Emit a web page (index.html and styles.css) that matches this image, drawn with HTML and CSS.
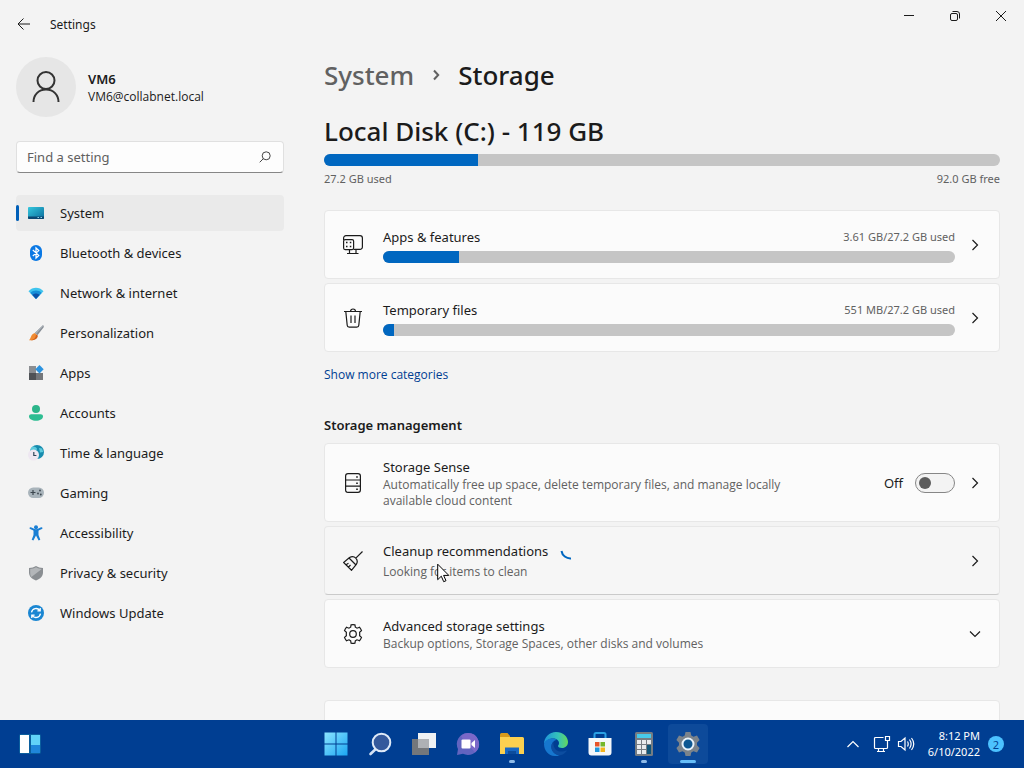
FILE: index.html
```html
<!DOCTYPE html>
<html lang="en">
<head>
    <meta charset="UTF-8">
    <meta name="viewport" content="width=device-width, initial-scale=1.0">
    <title>Settings</title>
    <link rel="stylesheet" href="styles.css">
</head>
<body>
    <div class="window">
        <header class="titlebar">
            <button class="back" aria-label="Back">
                <svg width="14" height="14" viewBox="0 0 14 14"><path d="M13 7H1.500M6.500 1.500L1 7l5.500 5.500"/></svg>
            </button>
            <span class="app-name">Settings</span>
            <div class="caption">
                <button aria-label="Minimize"><svg width="12" height="12" viewBox="0 0 12 12"><path d="M1 5.500h10"/></svg></button>
                <button aria-label="Restore"><svg width="12" height="12" viewBox="0 0 12 12"><rect x="1.500" y="3.500" width="7" height="7" rx="1.500"/><path d="M3.500 1.500H8a2.500 2.500 0 0 1 2.500 2.500v4.500"/></svg></button>
                <button aria-label="Close"><svg width="12" height="12" viewBox="0 0 12 12"><path d="M1 1l10 10M11 1L1 11"/></svg></button>
            </div>
        </header>
        <div class="body">
            <aside class="sidebar">
                <div class="user">
                    <div class="avatar">
                        <svg width="32" height="32" viewBox="0 0 32 32"><circle cx="16" cy="9.500" r="8.500"/><path d="M3.500 31c0-7 5-12.500 12.500-12.500s12.500 5.500 12.500 12.500"/></svg>
                    </div>
                    <div class="user-text">
                        <div class="user-name">VM6</div>
                        <div class="user-mail">VM6@collabnet.local</div>
                    </div>
                </div>
                <div class="search">
                    <input type="text" placeholder="Find a setting" aria-label="Find a setting">
                    <svg width="12" height="12" viewBox="0 0 12 12"><circle cx="7.200" cy="4.800" r="4"/><path d="M4.400 7.600L.7 11.300"/></svg>
                </div>
                <nav class="menu">
                    <a href="#" class="active">
                        <svg width="16" height="16" viewBox="0 0 16 16"><defs><linearGradient id="scr" x1="0" y1="0" x2="1" y2="1"><stop offset="0" stop-color="#35c8de"/><stop offset="1" stop-color="#0a6c9c"/></linearGradient></defs><rect y="2" width="16" height="12" rx="1" fill="url(#scr)"/><path d="M0 11.500h16V13a1 1 0 0 1-1 1H1a1 1 0 0 1-1-1z" fill="#0b4772"/><path d="M9.500 12.500h1.500M12.500 12.500h1.500" stroke="#8ed6ec"/></svg>
                        System
                    </a>
                    <a href="#">
                        <svg width="16" height="16" viewBox="0 0 16 16"><rect x="2" width="12" height="16" rx="6" fill="#0a78e4"/><path d="M4.800 5l6 5.400L8 13V3l2.800 2.600-6 5.400" fill="none" stroke="#fff" stroke-width="1.200"/></svg>
                        Bluetooth &amp; devices
                    </a>
                    <a href="#">
                        <svg width="16" height="16" viewBox="0 0 16 16"><path d="M.5 6.200C4.700 1.600 11.300 1.600 15.500 6.200L8 14z" fill="#3fc4ee"/><path d="M2.400 8C5.500 4.800 10.500 4.800 13.600 8L8 14z" fill="#168fd8"/><path d="M4.400 10c2-2 5.200-2 7.200 0L8 14z" fill="#0b52a8"/></svg>
                        Network &amp; internet
                    </a>
                    <a href="#">
                        <svg width="16" height="16" viewBox="0 0 16 16"><path d="M14.900.3c1 .5 1 1.500.6 2.200L9.400 10.300 6.800 8z" fill="#858c94"/><path d="M14.900.3L6.800 8l1.300 1.100L15.600.8z" fill="#aab1b8"/><path d="M6.600 8l3 2.500c.2 3.300-3 5.200-8.600 4.800 2-1.500 1.500-5.800 5.600-7.300z" fill="#f08b32"/><path d="M1 15.300c4 0 6.800-1.800 7-5.900l1.600 1.100c.2 3.300-3 5.200-8.600 4.800z" fill="#cf5e1c"/></svg>
                        Personalization
                    </a>
                    <a href="#">
                        <svg width="16" height="16" viewBox="0 0 16 16"><path d="M1 1h7v7H1z" fill="#8b8e92"/><path d="M1 8h7v7H1z" fill="#4f5256"/><path d="M8 8h7v7H8z" fill="#74777b"/><path d="M11.500 0l4.200 4.200-4.200 4.200-4.200-4.200z" fill="#2b93e0"/></svg>
                        Apps
                    </a>
                    <a href="#">
                        <svg width="16" height="16" viewBox="0 0 16 16"><circle cx="8" cy="4" r="4" fill="#2cb58a"/><path d="M3.200 9.300h9.600c1.200 0 2.200.8 2.200 2 0 2.900-3.200 4.500-7 4.500s-7-1.600-7-4.500c0-1.200 1-2 2.200-2z" fill="#2dbd92"/></svg>
                        Accounts
                    </a>
                    <a href="#">
                        <svg width="16" height="16" viewBox="0 0 16 16"><circle cx="9" cy="7" r="7" fill="#188cae"/><path d="M5 1.500c2 .3 4 .8 4 2.500S6 5 5 6.500 3 8 2.500 5.500 4 2 5 1.500zM11 3l3 .5 1.300 3.500-3.300.5z" fill="#5ccbdd"/><circle cx="5.500" cy="10" r="5.500" fill="#eee7f1"/><path d="M5.800 7v3.500h2.600" fill="none" stroke="#30465a" stroke-width="1.200"/></svg>
                        Time &amp; language
                    </a>
                    <a href="#">
                        <svg width="16" height="16" viewBox="0 0 16 16"><rect y="2.500" width="16" height="10.500" rx="5.200" fill="#a9b4bb"/><path d="M2.500 7.500h5M5 5v5" stroke="#3c464e" stroke-width="1.200"/><circle cx="10" cy="8.500" r=".9" fill="#3c464e"/><circle cx="12" cy="5.500" r=".9" fill="#3c464e"/><circle cx="12.800" cy="9.500" r=".9" fill="#3c464e"/></svg>
                        Gaming
                    </a>
                    <a href="#">
                        <svg width="16" height="16" viewBox="0 0 16 16"><circle cx="8" cy="2.200" r="2" fill="#1a7fd4"/><path d="M2.500 3.200L8 5.600l5.500-2.400" fill="none" stroke="#1a7fd4" stroke-width="2" stroke-linecap="round" stroke-linejoin="round"/><path d="M5.500 4.500h5v5.500l1.800 4.800-1.700.7L8 10.500l-2.600 5-1.700-.7L5.500 10z" fill="#1a7fd4"/></svg>
                        Accessibility
                    </a>
                    <a href="#">
                        <svg width="16" height="16" viewBox="0 0 16 16"><path d="M8 1c2 1.300 4.300 2 7 2v4.500c0 3.600-2.500 6.300-7 8-4.500-1.700-7-4.400-7-8V3c2.700 0 5-.7 7-2z" fill="#8a8e92"/><path d="M8 2.300c1.800 1 3.700 1.600 5.800 1.700L3.400 12C2.500 10.800 2.200 9.300 2.200 7.500V4C4.300 3.900 6.200 3.300 8 2.300z" fill="#b3b6b9"/></svg>
                        Privacy &amp; security
                    </a>
                    <a href="#">
                        <svg width="16" height="16" viewBox="0 0 16 16"><circle cx="8" cy="8" r="8" fill="#1a86d2"/><path d="M3.500 7.300a4.600 4.600 0 0 1 8.300-1.800M12.500 8.700a4.600 4.600 0 0 1-8.300 1.800M12.200 3v2.800H9.400M3.800 13v-2.800h2.800" fill="none" stroke="#fff" stroke-width="1.300"/></svg>
                        Windows Update
                    </a>
                </nav>
            </aside>
            <main class="content">
                <h1 class="breadcrumb">
                    <a href="#">System</a>
                    <svg width="8" height="12" viewBox="0 0 8 12"><path d="M2 1.500L6.200 6 2 10.500"/></svg>
                    <span>Storage</span>
                </h1>
                <h2 class="disk">Local Disk (C:) - 119 GB</h2>
                <div class="bar"><div class="fill" style="width: 22.8%"></div></div>
                <div class="disk-labels"><span>27.2 GB used</span><span>92.0 GB free</span></div>

                <div class="cards">
                    <a href="#" class="card">
                        <svg class="icon" width="20" height="20" viewBox="0 0 20 20"><path d="M.6 5V3A2.400 2.400 0 0 1 3 .6h14A2.400 2.400 0 0 1 19.400 3v9a2.400 2.400 0 0 1-2.400 2.400H10.500M6.500 14.500v4M13 14.500v4M4 18.500h11.500"/><rect x=".6" y="4.600" width="10" height="10" rx="1.500"/><path d="M3 7.500h1.500M6.800 7.500h1.500M3 11.500h1.500M6.800 11.500h1.500" stroke-width="1.600"/></svg>
                        <div class="text">
                            <div class="row"><span class="title">Apps &amp; features</span><span class="note">3.61 GB/27.2 GB used</span></div>
                            <div class="bar"><div class="fill" style="width: 13.3%"></div></div>
                        </div>
                        <svg class="chevron" width="12" height="12" viewBox="0 0 12 12"><path d="M3.500 1l5 5-5 5"/></svg>
                    </a>
                    <a href="#" class="card">
                        <svg class="icon" width="20" height="20" viewBox="0 0 20 20"><path d="M1 3.500h18M7.500 3.500a2.500 2.500 0 0 1 5 0M2.800 3.500l1.400 13.800a2 2 0 0 0 2 1.900h7.600a2 2 0 0 0 2-1.900L17.200 3.500M8 7.500v7.500M12 7.500v7.500"/></svg>
                        <div class="text">
                            <div class="row"><span class="title">Temporary files</span><span class="note">551 MB/27.2 GB used</span></div>
                            <div class="bar"><div class="fill" style="width: 2%"></div></div>
                        </div>
                        <svg class="chevron" width="12" height="12" viewBox="0 0 12 12"><path d="M3.500 1l5 5-5 5"/></svg>
                    </a>
                </div>
                <a href="#" class="more">Show more categories</a>

                <h3 class="section">Storage management</h3>
                <div class="cards">
                    <div class="card tall">
                        <svg class="icon" width="20" height="20" viewBox="0 0 20 20"><rect x="2.600" y=".6" width="14.800" height="18.800" rx="2.400"/><path d="M2.600 7h14.800M2.600 13.200h14.800"/><path d="M13.200 4h1.600M13.200 10.200h1.600M13.200 16.300h1.600" stroke-width="1.600"/></svg>
                        <div class="text">
                            <div class="title">Storage Sense</div>
                            <div class="description">Automatically free up space, delete temporary files, and manage locally available cloud content</div>
                        </div>
                        <label class="toggle">Off<input type="checkbox" role="switch"></label>
                        <svg class="chevron" width="12" height="12" viewBox="0 0 12 12"><path d="M3.500 1l5 5-5 5"/></svg>
                    </div>
                    <a href="#" class="card hover">
                        <svg class="icon" width="20" height="20" viewBox="0 0 20 20"><path d="M19.500.5l-6.700 6.700M6.500 6.500c2.500-1.500 4.800-1 6.300.6s1.900 4 .5 6.300L8.500 19.300.6 11.500zM6 7l7 7M3 13.800l2.500-1.500M5.500 16.200l2-2.200"/></svg>
                        <div class="text">
                            <div class="title">Cleanup recommendations<svg class="spinner" width="16" height="16" viewBox="0 0 16 16"><path d="M1.500 6A9 9 0 0 0 11 13.500"/></svg></div>
                            <div class="description spaced">Looking for items to clean</div>
                        </div>
                        <svg class="chevron" width="12" height="12" viewBox="0 0 12 12"><path d="M3.500 1l5 5-5 5"/></svg>
                        <svg class="pointer" width="13" height="20" viewBox="0 0 13 20"><path d="M.7 1.200v15.500l3.600-3.500 2.400 5.500 2.300-1-2.400-5.300h5.200z"/></svg>
                    </a>
                    <a href="#" class="card">
                        <svg class="icon" width="20" height="20" viewBox="0 0 20 20"><circle cx="10" cy="10" r="3.300"/><path d="M8.100.8q1.900-.4 3.800 0l.5 2.500q.9.300 1.700.9l2.500-.9q1.300 1.500 1.900 3.300l-1.900 1.700q.2 1.700 0 3.400l1.900 1.700q-.6 1.800-1.900 3.300l-2.500-.9q-.8.600-1.700.9l-.5 2.500q-1.900.4-3.800 0l-.5-2.500q-.9-.3-1.700-.9l-2.500.9Q2.100 15.200 1.500 13.400l1.900-1.700q-.2-1.700 0-3.400L1.500 6.600Q2.100 4.800 3.400 3.300l2.500.9q.8-.6 1.700-.9z"/></svg>
                        <div class="text">
                            <div class="title">Advanced storage settings</div>
                            <div class="description">Backup options, Storage Spaces, other disks and volumes</div>
                        </div>
                        <svg class="chevron" width="12" height="12" viewBox="0 0 12 12"><path d="M1 3.500l5 5 5-5"/></svg>
                    </a>
                </div>
                <div class="card next"></div>
            </main>
        </div>
    </div>

    <footer class="taskbar">
        <div class="widgets">
            <button aria-label="Widgets"><svg width="22" height="20" viewBox="0 0 22 20"><rect width="22" height="20" rx="2" fill="#0b5f9e"/><path d="M1 1h9v18H1z" fill="#fff"/><path d="M12 1h9v10h-9z" fill="#62d3f8"/><path d="M12 11h9v8h-9z" fill="#1f86da"/></svg></button>
        </div>
        <div class="apps">
            <button aria-label="Start"><svg width="24" height="24" viewBox="0 0 24 24"><defs><linearGradient id="win" x1="0" y1="0" x2="1" y2="1"><stop offset="0" stop-color="#8be4ff"/><stop offset="1" stop-color="#1ba6f3"/></linearGradient></defs><path d="M.5.500h11v11H.5zM12.500.5h11v11h-11zM.5 12.500h11v11H.5zM12.500 12.500h11v11h-11z" fill="url(#win)"/></svg></button>
            <button aria-label="Search"><svg width="24" height="24" viewBox="0 0 24 24"><path d="M7.500 17.200L2.500 22" stroke="#d4e2f5" stroke-width="2.600" stroke-linecap="round"/><circle cx="13.500" cy="10.500" r="8.800" fill="#34599c" stroke="#dfeaf8" stroke-width="2"/></svg></button>
            <button aria-label="Task view"><svg width="24" height="24" viewBox="0 0 24 24"><path d="M6 1h18v15H6z" fill="#eef1f4"/><path d="M0 7h17v16H0z" fill="#74777b"/><path d="M6 7h11v9H6z" fill="#aeb1b5"/></svg></button>
            <button aria-label="Chat"><svg width="24" height="24" viewBox="0 0 24 24"><path d="M12 1a11 11 0 1 1-5 20.800L1 23l1-6A11 11 0 0 1 12 1z" fill="#6264c0"/><path d="M12 1a11 11 0 0 1 7 19.500C14 14 8 9 5 4A11 11 0 0 1 12 1z" fill="#7a68c8"/><rect x="5.500" y="7.500" width="9" height="9" rx="1" fill="#fff"/><path d="M15.500 11l3.500-3v8l-3.500-3z" fill="#fff"/></svg></button>
            <button aria-label="File Explorer" class="running"><svg width="26" height="24" viewBox="0 0 26 24"><path d="M1 2.500A1.500 1.500 0 0 1 2.500 1h6l2.500 3v4H1z" fill="#d79a1c"/><path d="M1 5h22.500A1.500 1.500 0 0 1 25 6.500V22H1z" fill="#fbd050"/><path d="M6 15.500h14V22H6z" fill="#1768c4"/><path d="M9 19h8v3H9z" fill="#0c4c9c"/></svg></button>
            <button aria-label="Edge"><svg width="24" height="24" viewBox="0 0 24 24"><defs><linearGradient id="edge" x1="0" y1="0" x2="1" y2="0"><stop offset="0" stop-color="#1e93dc"/><stop offset=".6" stop-color="#35c3b8"/><stop offset="1" stop-color="#64d85c"/></linearGradient></defs><path d="M12 0c7 0 12 4.800 12 10 0 3.500-2.500 6-6 6-2.500 0-4-.8-4-2 0-.7 1-1.200 1-3 0-2.500-2.500-4.500-6-4.500C5 6.500 1.500 9 0 12 0 5.400 5.400 0 12 0z" fill="url(#edge)"/><path d="M0 12c1-3.500 4.500-5.500 8-5.500 2 0 3.500.5 4.500 1.300C9 9 7 12 7.500 15.500 8 19.500 11 22.500 15.500 23.400 6.500 26 0 20 0 12z" fill="#1677cf"/><path d="M9.500 10c-.8 4.500 2 9 6.500 9.500 2.500.3 4.500-.2 6-1 .5-.3.900.2.500.7-1.700 2.300-4.500 4-7.500 4.300C10.500 22.500 7.300 19 7.300 15.200c0-2 .7-3.800 2.200-5.200z" fill="#0c4da0"/></svg></button>
            <button aria-label="Store"><svg width="24" height="24" viewBox="0 0 24 24"><path d="M6.500 6V2.500A1.500 1.500 0 0 1 8 1h8a1.500 1.500 0 0 1 1.500 1.500V6" fill="none" stroke="#2ba0e4" stroke-width="2"/><path d="M.5 6h23v14.500a3 3 0 0 1-3 3h-17a3 3 0 0 1-3-3z" fill="#f4f7fa"/><path d="M7 10h4.500v4.500H7z" fill="#e7542a"/><path d="M12.500 10H17v4.500h-4.500z" fill="#74b72c"/><path d="M7 15.500h4.500V20H7z" fill="#1f96dd"/><path d="M12.500 15.500H17V20h-4.500z" fill="#f4b51e"/></svg></button>
            <button aria-label="Calculator" class="running"><svg width="18" height="24" viewBox="0 0 18 24"><rect width="18" height="24" rx="1.500" fill="#757c83"/><path d="M2 2h14v4H2z" fill="#47c9ea"/><path d="M2 8h4v4H2zM7 8h4v4H7zM12 8h4v4h-4zM2 13h4v4H2zM7 13h4v4H7zM2 18h4v4H2zM7 18h4v4H7z" fill="#e7eaed"/><path d="M12 13h4v9h-4z" fill="#0e5478"/></svg></button>
            <button aria-label="Settings" class="running current"><svg width="24" height="24" viewBox="0 0 24 24"><path d="M9.500 0h5l.8 3.500 2.200 1.200L21 3.600l2.600 4.500L21 10.700v2.600l2.600 2.600L21 20.400l-3.500-1.100-2.200 1.200-.8 3.500h-5l-.8-3.500-2.200-1.200L3 20.400.4 15.900 3 13.300v-2.600L.4 8.100 3 3.600l3.500 1.100 2.200-1.200z" fill="#7b838b"/><circle cx="12" cy="12" r="5.500" fill="#0c5792" stroke="#e8f2fa" stroke-width="2"/></svg></button>
        </div>
        <div class="tray">
            <button class="tray-icon" aria-label="Hidden icons"><svg width="14" height="14" viewBox="0 0 14 14"><path d="M1.500 10L7 4.500l5.500 5.500"/></svg></button>
            <button class="tray-icon" aria-label="Network and volume">
                <svg width="18" height="18" viewBox="0 0 18 18"><path d="M10.500 2.500h-8a1 1 0 0 0-1 1v9a1 1 0 0 0 1 1h11a1 1 0 0 0 1-1V8M5.500 13.500v3M10.500 13.500v3M4 16.500h8M12.500 1.500h4v4h-4zM14.500 5.500v3"/></svg>
                <svg width="18" height="18" viewBox="0 0 18 18"><path d="M1.500 6.500h2.500l4-3.500v12l-4-3.500H1.500zM10.500 6.500q1.500 2.500 0 5M12.500 4.500q3.200 4.500 0 9M14.500 3q4.500 6 0 12"/></svg>
            </button>
            <div class="clock"><span>8:12 PM</span><span>6/10/2022</span></div>
            <button class="badge" aria-label="Notifications">2</button>
        </div>
    </footer>
</body>
</html>
```
FILE: styles.css
```css
* {
    box-sizing: border-box;
}
body {
    margin: 0;
    height: 100vh;
    display: flex;
    flex-direction: column;
    overflow: hidden;
    font-family: "Noto Sans", "Open Sans", sans-serif;
    font-size: 13px;
    line-height: 20px;
    color: #1b1b1b;
    background-color: #f3f3f3;
}
button {
    border: none;
    padding: 0;
    background: none;
    font-family: inherit;
    color: inherit;
    display: flex;
    align-items: center;
    justify-content: center;
}
a {
    color: inherit;
    text-decoration: none;
}
h1, h2, h3 {
    margin: 0;
    font-weight: 600;
}
svg {
    flex-shrink: 0;
}
.window {
    flex: 1;
    min-height: 0;
    display: flex;
    flex-direction: column;
}

/* Title bar */
.titlebar {
    display: flex;
    align-items: center;
    height: 48px;
    flex-shrink: 0;
}
.titlebar svg {
    fill: none;
    stroke: #1b1b1b;
}
.back {
    width: 48px;
    height: 48px;
}
.app-name {
    font-size: 12px;
    padding: 2px 0 0 2px;
}
.caption {
    display: flex;
    margin-left: auto;
    align-self: flex-start;
}
.caption button {
    width: 46px;
    height: 32px;
}

/* Sidebar */
.body {
    flex: 1;
    min-height: 0;
    display: flex;
}
.sidebar {
    width: 300px;
    padding: 9px 16px 0;
    flex-shrink: 0;
}
.user {
    display: flex;
    align-items: center;
    gap: 12px;
    height: 60px;
}
.avatar {
    width: 60px;
    height: 60px;
    border-radius: 50%;
    background-color: #e6e6e6;
    display: flex;
    align-items: center;
    justify-content: center;
}
.avatar svg {
    fill: none;
    stroke: #333;
    stroke-width: 2;
}
.user-text {
    padding-top: 2px;
    line-height: 18px;
}
.user-name {
    font-weight: 600;
}
.user-mail {
    font-family: "Open Sans", "Noto Sans", sans-serif;
    font-size: 12px;
}
.search {
    display: flex;
    align-items: center;
    height: 32px;
    margin-top: 24px;
    padding: 0 12px 0 10px;
    background-color: #fdfdfd;
    border: 1px solid #e0e0e0;
    border-bottom-color: #868686;
    border-radius: 4px;
}
.search input {
    flex: 1;
    min-width: 0;
    border: none;
    padding: 0;
    outline: none;
    background: none;
    font: inherit;
}
.search input::placeholder {
    color: #606060;
    opacity: 1;
}
.search svg {
    fill: none;
    stroke: #444;
}
.menu {
    display: flex;
    flex-direction: column;
    gap: 4px;
    margin-top: 22px;
}
.menu a {
    display: flex;
    align-items: center;
    gap: 16px;
    height: 36px;
    padding-left: 12px;
    border-radius: 4px;
}
.menu a.active {
    position: relative;
    background-color: #eaeaea;
}
.menu a.active::before {
    content: "";
    position: absolute;
    left: 0;
    top: 10px;
    width: 3px;
    height: 16px;
    border-radius: 2px;
    background-color: #005fb8;
}

/* Main column */
.content {
    flex: 1;
    min-width: 0;
    padding: 9px 24px 0;
    overflow: hidden;
}
.breadcrumb {
    display: flex;
    align-items: center;
    gap: 18px;
    font-size: 26px;
    font-weight: 500;
    line-height: 36px;
}
.breadcrumb a {
    color: #616161;
}
.breadcrumb svg {
    fill: none;
    stroke: #616161;
    stroke-width: 2;
}
.disk {
    font-size: 26px;
    font-weight: 500;
    line-height: 36px;
    margin: 20px 0 5px;
}
.bar {
    height: 12px;
    border-radius: 6px;
    overflow: hidden;
    background-color: #c5c5c5;
}
.fill {
    height: 100%;
    background-color: #0067c0;
}
.disk-labels {
    display: flex;
    justify-content: space-between;
    margin: 5px 0 23px;
    font-size: 11px;
    line-height: 16px;
    color: #616161;
}
.cards {
    display: flex;
    flex-direction: column;
    gap: 4px;
}
.card {
    display: flex;
    align-items: center;
    min-height: 69px;
    padding: 0 18px;
    background-color: #fbfbfb;
    border: 1px solid #e7e7e7;
    border-radius: 4px;
}
.card.tall {
    min-height: 79px;
}
.card.hover {
    position: relative;
    background-color: #f6f6f6;
    border-bottom-color: #cacaca;
}
.icon, .chevron {
    fill: none;
    stroke: #1b1b1b;
    stroke-width: 1.2;
}
.chevron {
    margin-left: 14px;
}
.text {
    flex: 1;
    min-width: 0;
    margin-left: 20px;
}
.row {
    display: flex;
    align-items: center;
    justify-content: space-between;
    margin-bottom: 4px;
}
.note {
    font-size: 11px;
    line-height: 16px;
    color: #616161;
}
.description {
    max-width: 420px;
    font-family: "Open Sans", "Noto Sans", sans-serif;
    font-size: 12px;
    line-height: 16px;
    color: #616161;
}
.spaced {
    margin-top: 3px;
}
.title {
    display: flex;
    align-items: center;
}
.spinner {
    margin: 4px 0 0 12px;
    fill: none;
    stroke: #0067c0;
    stroke-width: 2;
}
.pointer {
    position: absolute;
    left: 112px;
    top: 36px;
    fill: #fff;
    stroke: #000;
}
.more {
    display: block;
    width: fit-content;
    margin-top: 13px;
    font-family: "Open Sans", "Noto Sans", sans-serif;
    font-size: 12px;
    color: #003e92;
}
.section {
    margin: 30px 0 8px;
    font-size: 13px;
}
.toggle {
    display: flex;
    align-items: center;
    gap: 12px;
}
.toggle input {
    appearance: none;
    display: flex;
    align-items: center;
    width: 40px;
    height: 20px;
    margin: 0;
    padding: 0 3px;
    border: 1px solid #868686;
    border-radius: 10px;
    background-color: #f3f3f3;
}
.toggle input::before {
    content: "";
    width: 12px;
    height: 12px;
    border-radius: 50%;
    background-color: #5c5c5c;
}
.toggle input:checked {
    background-color: #0067c0;
    justify-content: flex-end;
}
.next {
    margin-top: 32px;
}

/* Taskbar */
.taskbar {
    display: grid;
    grid-template-columns: 1fr auto 1fr;
    align-items: center;
    height: 48px;
    flex-shrink: 0;
    color: #fff;
    background-color: #003e92;
}
.widgets {
    padding-left: 8px;
}
.widgets button {
    width: 44px;
    height: 40px;
}
.apps {
    display: flex;
    gap: 4px;
}
.apps button {
    position: relative;
    width: 40px;
    height: 40px;
    border-radius: 4px;
}
.apps .running::after {
    content: "";
    position: absolute;
    left: 17px;
    bottom: 1px;
    width: 6px;
    height: 3px;
    border-radius: 2px;
    background-color: #8fbbe8;
}
.apps .current {
    background-color: #0d4a9a;
}
.apps .current::after {
    left: 12px;
    width: 16px;
    background-color: #66bdf8;
}
.tray {
    display: flex;
    align-items: center;
    justify-content: flex-end;
    padding-right: 20px;
}
.tray-icon {
    gap: 6px;
    height: 40px;
    margin-right: 13px;
}
.tray-icon svg {
    fill: none;
    stroke: #fff;
    stroke-width: 1.2;
}
.clock {
    display: flex;
    flex-direction: column;
    text-align: right;
    font-size: 11px;
    line-height: 16px;
}
.badge {
    width: 16px;
    height: 16px;
    margin-left: 8px;
    border-radius: 50%;
    font-size: 11px;
    color: #003e92;
    background-color: #4cc2ff;
}
```
